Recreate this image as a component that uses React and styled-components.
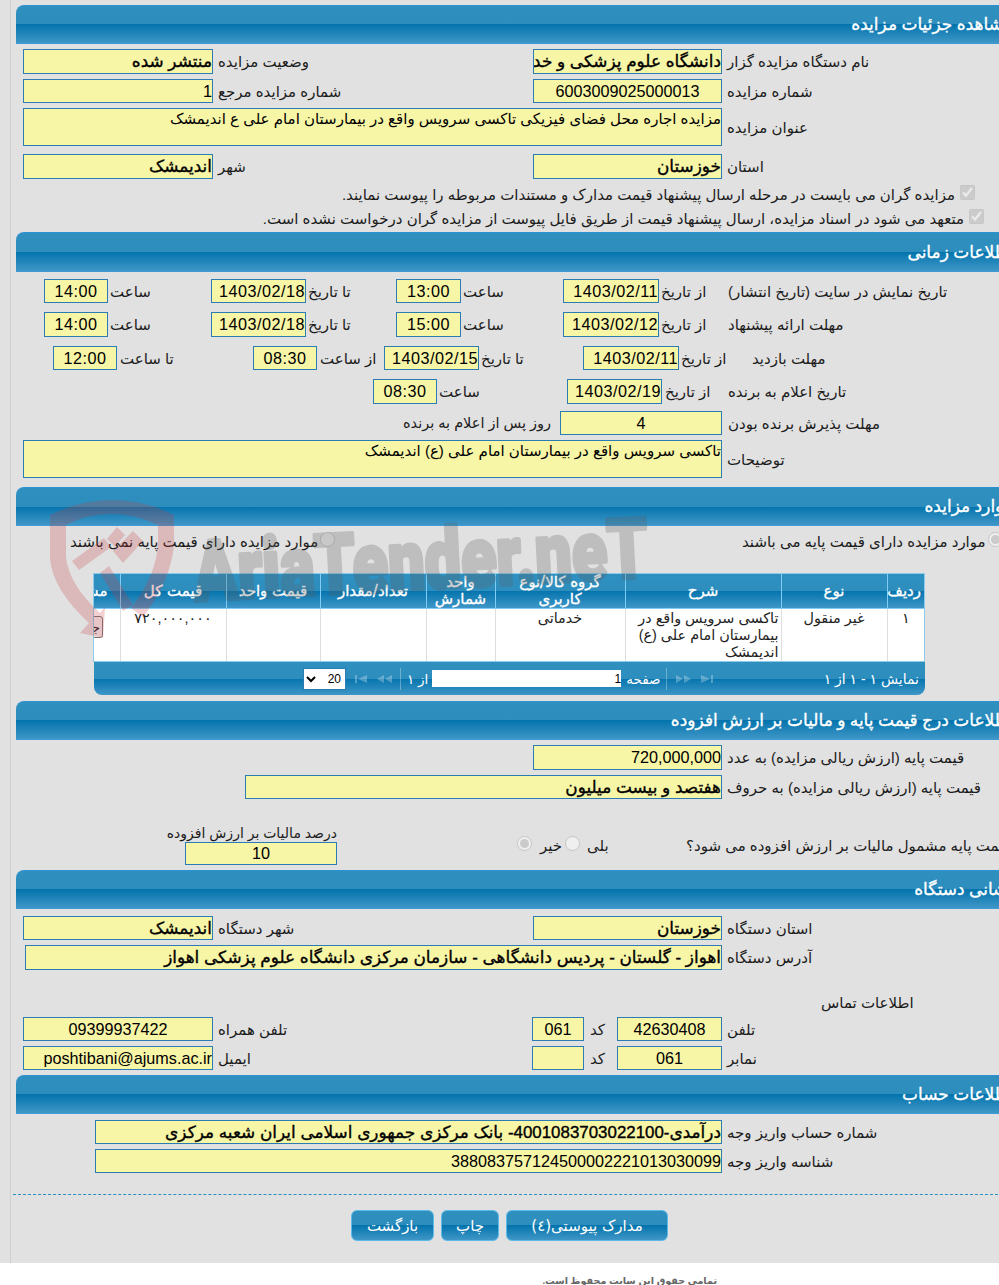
import React from 'react';
import styled, { createGlobalStyle, css } from 'styled-components';

const GlobalStyle = createGlobalStyle`
  html, body {
    margin: 0;
    padding: 0;
    background: #fff;
  }
  body {
    font-family: "Liberation Sans", "DejaVu Sans", sans-serif;
    font-size: 15px;
    color: #111;
  }
`;

const blueBand = css`
  background: linear-gradient(#2f90c0 0, #2d8ebe 50%, #0474ad 50%, #3f96c7 100%);
`;

const thick = css`
  -webkit-text-stroke: 0.35px currentColor;
`;

function App() {
  return (
    <Page>
      <GlobalStyle />
      <Frame>
        <Main>
          <Title $h={39}>مشاهده جزئیات مزایده</Title>
          <Row $cols="510px 1fr" $left={7} $h={25} $top={5}>
            <Cell>
              <Box $w={190} $bold readOnly dir="rtl" value="منتشر شده" />
              <Label>وضعیت مزایده</Label>
            </Cell>
            <Cell>
              <Box $w={189} $bold readOnly dir="rtl" value="دانشگاه علوم پزشکی و خدمات بهداشتی درمانی اهواز" />
              <Label>نام دستگاه مزایده گزار</Label>
            </Cell>
          </Row>
          <Row $cols="510px 1fr" $left={7} $h={24} $top={5}>
            <Cell>
              <Box $w={190} readOnly dir="rtl" value="1" />
              <Label>شماره مزایده مرجع</Label>
            </Cell>
            <Cell>
              <Box $w={189} $center readOnly value="6003009025000013" />
              <Label>شماره مزایده</Label>
            </Cell>
          </Row>
          <Row $cols="1fr" $left={7} $h={38} $top={5}>
            <Cell>
              <Area $w={699} readOnly dir="rtl" value="مزایده اجاره محل فضای فیزیکی تاکسی سرویس واقع در بیمارستان امام علی ع اندیمشک" />
              <Label>عنوان مزایده</Label>
            </Cell>
          </Row>
          <Row $cols="510px 1fr" $left={7} $h={25} $top={8}>
            <Cell>
              <Box $w={190} $bold readOnly dir="rtl" value="اندیمشک" />
              <Label>شهر</Label>
            </Cell>
            <Cell>
              <Box $w={189} $bold readOnly dir="rtl" value="خوزستان" />
              <Label>استان</Label>
            </Cell>
          </Row>
          <CheckRow $w={959} $top={3}>
            <Label>مزایده گران می بایست در مرحله ارسال پیشنهاد قیمت مدارک و مستندات مربوطه را پیوست نمایند.</Label>
            <Check type="checkbox" checked disabled readOnly />
          </CheckRow>
          <CheckRow $w={968} $top={0}>
            <Label>متعهد می شود در اسناد مزایده، ارسال پیشنهاد قیمت از طریق فایل پیوست از مزایده گران درخواست نشده است.</Label>
            <Check type="checkbox" checked disabled readOnly />
          </CheckRow>

          <Title $h={40} $top={2}>اطلاعات زمانی</Title>
          <Row $cols="167px 185px 167px 165px 1fr" $left={28} $h={24} $top={7}>
            <Cell $gap={2}><DateBox $w={64} $center readOnly value="14:00" /><Label>ساعت</Label></Cell>
            <Cell $gap={2}><DateBox $w={95} readOnly value="1403/02/18" $end /><Label>تا تاریخ</Label></Cell>
            <Cell $gap={2}><DateBox $w={65} $center readOnly value="13:00" /><Label>ساعت</Label></Cell>
            <Cell $gap={2}><DateBox $w={96} readOnly value="1403/02/11" $end /><Label>از تاریخ</Label></Cell>
            <Cell><Label>تاریخ نمایش در سایت (تاریخ انتشار)</Label></Cell>
          </Row>
          <Row $cols="167px 185px 167px 165px 1fr" $left={28} $h={25} $top={9}>
            <Cell $gap={2}><DateBox $w={64} $center readOnly value="14:00" /><Label>ساعت</Label></Cell>
            <Cell $gap={2}><DateBox $w={95} readOnly value="1403/02/18" $end /><Label>تا تاریخ</Label></Cell>
            <Cell $gap={2}><DateBox $w={65} $center readOnly value="15:00" /><Label>ساعت</Label></Cell>
            <Cell $gap={2}><DateBox $w={96} readOnly value="1403/02/12" $end /><Label>از تاریخ</Label></Cell>
            <Cell><Label>مهلت ارائه پیشنهاد</Label></Cell>
          </Row>
          <Row $cols="200px 131px 199px 169px 1fr" $left={37} $h={24} $top={9}>
            <Cell $gap={3}><DateBox $w={64} $center readOnly value="12:00" /><Label>تا ساعت</Label></Cell>
            <Cell $gap={3}><DateBox $w={64} $center readOnly value="08:30" /><Label>از ساعت</Label></Cell>
            <Cell $gap={2}><DateBox $w={95} $end readOnly value="1403/02/15" /><Label>تا تاریخ</Label></Cell>
            <Cell $gap={2}><DateBox $w={96} $end readOnly value="1403/02/11" /><Label>از تاریخ</Label></Cell>
            <Cell><Label>مهلت بازدید</Label></Cell>
          </Row>
          <Row $cols="194px 161px 1fr" $left={357} $h={25} $top={9}>
            <Cell $gap={2}><DateBox $w={64} $center readOnly value="08:30" /><Label>ساعت</Label></Cell>
            <Cell $gap={3}><DateBox $w={95} readOnly value="1403/02/19" $end /><Label>از تاریخ</Label></Cell>
            <Cell><Label>تاریخ اعلام به برنده</Label></Cell>
          </Row>
          <Row $cols="157px 1fr" $left={387} $h={24} $top={7}>
            <Cell><Label $size={14.5}>روز پس از اعلام به برنده</Label></Cell>
            <Cell $gap={6}><Box $w={162} $center readOnly value="4" /><Label>مهلت پذیرش برنده بودن</Label></Cell>
          </Row>
          <Row $cols="1fr" $left={7} $h={38} $top={5}>
            <Cell>
              <Area $w={699} readOnly dir="rtl" value="تاکسی سرویس واقع در بیمارستان امام علی (ع) اندیمشک" />
              <Label>توضیحات</Label>
            </Cell>
          </Row>

          <Title $h={39} $top={9}>موارد مزایده</Title>
          <Row $cols="272px 1fr" $left={54} $h={24} $top={3}>
            <Cell $gap={2}>
              <Label>موارد مزایده دارای قیمت پایه نمی باشند</Label>
              <Radio type="radio" name="base" disabled />
            </Cell>
            <Cell $gap={2} $indent={400}>
              <Label>موارد مزایده دارای قیمت پایه می باشند</Label>
              <Radio type="radio" name="base" disabled defaultChecked />
            </Cell>
          </Row>
          <TableWrap dir="rtl">
            <Grid>
              <colgroup>
                <col style={{ width: 37 }} />
                <col style={{ width: 106 }} />
                <col style={{ width: 156 }} />
                <col style={{ width: 130 }} />
                <col style={{ width: 69 }} />
                <col style={{ width: 106 }} />
                <col style={{ width: 94 }} />
                <col style={{ width: 106 }} />
                <col style={{ width: 70 }} />
              </colgroup>
              <thead>
                <tr>
                  <Th>ردیف</Th>
                  <Th>نوع</Th>
                  <Th>شرح</Th>
                  <Th>گروه کالا/نوع کاربری</Th>
                  <Th>واحد شمارش</Th>
                  <Th>تعداد/مقدار</Th>
                  <Th>قیمت واحد</Th>
                  <Th>قیمت کل</Th>
                  <ActionTh>مشاهده</ActionTh>
                </tr>
              </thead>
              <tbody>
                <tr>
                  <Td>۱</Td>
                  <Td>غیر منقول</Td>
                  <Td $desc>تاکسی سرویس واقع در بیمارستان امام علی (ع) اندیمشک</Td>
                  <Td>خدماتی</Td>
                  <Td />
                  <Td />
                  <Td />
                  <Td>۷۲۰,۰۰۰,۰۰۰</Td>
                  <ActionTd><RowButton type="button">جزئیات</RowButton></ActionTd>
                </tr>
              </tbody>
            </Grid>
          </TableWrap>
          <Pager>
            <PageSize dir="rtl" defaultValue="20">
              <option>20</option>
              <option>50</option>
            </PageSize>
            <PagerIcon $ml={9} viewBox="0 0 12 10" $w={12}>
              <rect x="0" y="1" width="2" height="8" />
              <path d="M12 1v8L3 5z" />
            </PagerIcon>
            <PagerIcon $ml={10} viewBox="0 0 15 10" $w={15}>
              <path d="M7 1v8L0 5zM15 1v8L8 5z" />
            </PagerIcon>
            <PagerSep $ml={8} />
            <PagerText $ml={6}>از ۱</PagerText>
            <PageInput readOnly dir="rtl" value="1" />
            <PagerText $ml={5}>صفحه</PagerText>
            <PagerSep $ml={5} />
            <PagerIcon $ml={9} viewBox="0 0 15 10" $w={15}>
              <path d="M0 1v8l7-4zM8 1v8l7-4z" />
            </PagerIcon>
            <PagerIcon $ml={10} viewBox="0 0 12 10" $w={12}>
              <path d="M0 1v8l9-4z" />
              <rect x="10" y="1" width="2" height="8" />
            </PagerIcon>
            <PagerInfo>نمایش ۱ - ۱ از ۱</PagerInfo>
          </Pager>

          <Title $h={39} $top={6}>اطلاعات درج قیمت پایه و مالیات بر ارزش افزوده</Title>
          <Row $cols="1fr" $left={517} $h={25} $top={5}>
            <Cell><Box $w={189} readOnly dir="rtl" value="720,000,000" /><Label>قیمت پایه (ارزش ریالی مزایده) به عدد</Label></Cell>
          </Row>
          <Row $cols="1fr" $left={229} $h={24} $top={5}>
            <Cell><Box $w={477} $bold readOnly dir="rtl" value="هفتصد و بیست میلیون" /><Label>قیمت پایه (ارزش ریالی مزایده) به حروف</Label></Cell>
          </Row>
          <Row $cols="348px 169px 1fr" $left={153} $h={40} $top={26}>
            <TaxCell>
              <Label $size={14}>درصد مالیات بر ارزش افزوده</Label>
              <Box $w={152} $h={23} $center readOnly value="10" />
            </TaxCell>
            <Cell $gap={3}>
              <Radio type="radio" name="tax" disabled defaultChecked />
              <Label $ml={5}>خیر</Label>
              <Radio type="radio" name="tax" disabled />
              <Label $ml={4}>بلی</Label>
            </Cell>
            <Cell><Label>قیمت پایه مشمول مالیات بر ارزش افزوده می شود؟</Label></Cell>
          </Row>

          <Title $h={39} $top={5}>نشانی دستگاه</Title>
          <Row $cols="510px 1fr" $left={7} $h={24} $top={7}>
            <Cell><Box $w={190} $bold readOnly dir="rtl" value="اندیمشک" /><Label>شهر دستگاه</Label></Cell>
            <Cell><Box $w={189} $bold readOnly dir="rtl" value="خوزستان" /><Label>استان دستگاه</Label></Cell>
          </Row>
          <Row $cols="1fr" $left={9} $h={25} $top={5}>
            <Cell><Box $w={697} $bold readOnly dir="rtl" value="اهواز - گلستان - پردیس دانشگاهی - سازمان مرکزی دانشگاه علوم پزشکی اهواز" /><Label>آدرس دستگاه</Label></Cell>
          </Row>
          <Row $cols="1fr" $left={805} $h={20} $top={22}>
            <Cell><Label>اطلاعات تماس</Label></Cell>
          </Row>
          <Row $cols="509px 85px 1fr" $left={7} $h={24} $top={5}>
            <Cell><Box $w={190} $center readOnly value="09399937422" /><Label>تلفن همراه</Label></Cell>
            <Cell $gap={6}><Box $w={52} $center readOnly value="061" /><Label>کد</Label></Cell>
            <Cell><Box $w={105} $center readOnly value="42630408" /><Label>تلفن</Label></Cell>
          </Row>
          <Row $cols="509px 85px 1fr" $left={7} $h={24} $top={5}>
            <Cell><Box $w={190} readOnly dir="rtl" value="poshtibani@ajums.ac.ir" /><Label>ایمیل</Label></Cell>
            <Cell $gap={6}><Box $w={52} $center readOnly value="" /><Label>کد</Label></Cell>
            <Cell><Box $w={105} $center readOnly value="061" /><Label>نمابر</Label></Cell>
          </Row>

          <Title $h={39} $top={5}>اطلاعات حساب</Title>
          <Row $cols="1fr" $left={79} $h={24} $top={6}>
            <Cell><Box $w={627} $bold readOnly dir="rtl" value="درآمدی-4001083703022100- بانک مرکزی جمهوری اسلامی ایران شعبه مرکزی" /><Label>شماره حساب واریز وجه</Label></Cell>
          </Row>
          <Row $cols="1fr" $left={79} $h={24} $top={5}>
            <Cell><Box $w={627} readOnly dir="rtl" value="388083757124500002221013030099" /><Label>شناسه واریز وجه</Label></Cell>
          </Row>
          <Divider />
          <Actions>
            <ActionButton type="button" $w={83}>بازگشت</ActionButton>
            <ActionButton type="button" $w={58}>چاپ</ActionButton>
            <ActionButton type="button" $w={162}>مدارک پیوستی(٤)</ActionButton>
          </Actions>
        </Main>
      </Frame>
      <Footer>تمامی حقوق این سایت محفوظ است.</Footer>

      <Watermark viewBox="0 0 620 150" aria-hidden="true">
        <g fill="#c8383c" fillOpacity="0.24">
          <path d="M5 20 Q35 5 67 5 Q100 5 129 20 L129 50 Q126 85 98 122 L86 113 Q112 80 113 47 L113 30 Q90 19 67 19 Q42 19 21 30 L21 62 Q24 90 55 118 L60 112 L58 143 L35 138 L44 128 Q8 95 5 64 Z" />
          <path d="M27 66 L59 43 L66 52 L34 75 Z" />
          <path d="M62 44 L72 32 L80 40 L70 52 Z" />
          <path d="M68 56 L88 36 L98 46 L78 68 Z" />
          <path d="M55 78 L64 71 L88 110 L78 116 Z" />
        </g>
        <WatermarkText x="150" y="106" textLength="455" lengthAdjust="spacingAndGlyphs" transform="rotate(-3 150 106)">
          AriaTender.neT
        </WatermarkText>
      </Watermark>
    </Page>
  );
}

export default App;

const Page = styled.div`
  position: relative;
  width: 999px;
  height: 1285px;
  overflow: hidden;
  background: #fff;
`;

const Frame = styled.div`
  width: 1020px;
  padding-left: 10px;
  box-sizing: border-box;
  background: #e1e1e1;
`;

const Main = styled.main`
  box-sizing: border-box;
  width: 1010px;
  height: 1263px;
  padding: 5px 0 0 5px;
  border-left: 1px solid #cfcfcf;
`;

const Title = styled.h2`
  ${blueBand}
  ${thick}
  box-sizing: border-box;
  height: ${({ $h }) => $h}px;
  margin: ${({ $top }) => $top || 0}px 0 0;
  padding: 0 7px 0 0;
  border-top: 1px solid #2b93d4;
  border-bottom: 1px solid #3f9bd6;
  border-top-left-radius: 8px;
  font-family: "DejaVu Sans", sans-serif;
  font-size: 17px;
  font-weight: 400;
  word-spacing: -1px;
  line-height: ${({ $h }) => $h - 2}px;
  color: #fff;
  direction: rtl;
  white-space: nowrap;
`;

const Row = styled.div`
  display: grid;
  grid-template-columns: ${({ $cols }) => $cols};
  grid-template-rows: ${({ $h }) => $h}px;
  align-items: center;
  height: ${({ $h }) => $h}px;
  margin-top: ${({ $top }) => $top}px;
  padding-left: ${({ $left }) => $left}px;
  white-space: nowrap;
`;

const Cell = styled.div`
  display: flex;
  align-items: center;
  gap: ${({ $gap }) => ($gap === undefined ? 5 : $gap)}px;
  height: 100%;
  padding-left: ${({ $indent }) => $indent || 0}px;
`;

const TaxCell = styled.div`
  display: flex;
  flex-direction: column;
  align-items: flex-end;
  justify-content: flex-end;
  width: 168px;
  height: 100%;
`;

const Label = styled.label`
  direction: rtl;
  margin-left: ${({ $ml }) => $ml || 0}px;
  font-size: ${({ $size }) => $size || 15}px;
  line-height: 17px;
  color: #1c1c1c;
  white-space: nowrap;
`;

const fieldStyles = css`
  box-sizing: border-box;
  flex: none;
  width: ${({ $w }) => $w}px;
  padding: 0;
  border: 1px solid #2a7cb2;
  background: #f7f5a6;
  color: #000;
  outline: none;
  font-family: "Liberation Sans", "DejaVu Sans", sans-serif;
`;

const Box = styled.input`
  ${fieldStyles}
  ${({ $bold }) => $bold && thick}
  height: ${({ $h }) => ($h ? `${$h}px` : '100%')};
  font-size: ${({ $bold }) => ($bold ? 16.9 : 16.2)}px;
  text-align: ${({ $center, $end }) => ($center ? 'center' : $end ? 'right' : 'start')};
`;

const DateBox = styled(Box)`
  letter-spacing: 0.5px;
`;

const Area = styled.textarea`
  ${fieldStyles}
  height: 100%;
  overflow: hidden;
  resize: none;
  font-size: 15px;
  line-height: 20px;
`;

const CheckRow = styled.div`
  display: flex;
  justify-content: flex-end;
  align-items: center;
  gap: 5px;
  box-sizing: border-box;
  width: ${({ $w }) => $w}px;
  height: 24px;
  margin-top: ${({ $top }) => $top}px;
`;

const Check = styled.input`
  width: 15px;
  height: 15px;
  margin: -3px 0 0;
  flex: none;
`;

const Radio = styled.input`
  width: 15px;
  height: 15px;
  margin: -3px 0 0;
  flex: none;
`;

const TableWrap = styled.div`
  box-sizing: border-box;
  width: 832px;
  height: 89px;
  margin: 20px 0 0 77px;
  overflow: hidden;
  border: 1px solid #8ccbea;
`;

const Grid = styled.table`
  width: 874px;
  table-layout: fixed;
  border-collapse: collapse;
  background: #fff;
`;

const Th = styled.th`
  ${blueBand}
  ${thick}
  height: 34px;
  padding: 0 3px;
  border-left: 1px solid #7fcdf5;
  border-bottom: 1px solid #7fcdf5;
  font-family: "DejaVu Sans", sans-serif;
  font-size: 15px;
  font-weight: 400;
  line-height: 17px;
  color: #fff;
  text-align: center;
`;

const ActionTh = styled(Th)`
  padding-right: 12px;
  text-align: right;
  white-space: nowrap;
`;

const Td = styled.td`
  height: 50px;
  padding: 1px 2px 0;
  border-left: 1px solid #dedede;
  font-size: 14.4px;
  line-height: 17px;
  color: #222;
  text-align: ${({ $desc }) => ($desc ? 'right' : 'center')};
  vertical-align: top;
`;

const ActionTd = styled(Td)`
  padding: 7px 17px 0 0;
  overflow: hidden;
  text-align: right;
`;

const RowButton = styled.button`
  width: 45px;
  height: 22px;
  padding: 0 2px;
  border: 1px solid #777;
  border-radius: 3px;
  background: #f2f2f2;
  font-size: 13px;
  color: #222;
  text-align: right;
`;

const Pager = styled.div`
  ${blueBand}
  display: flex;
  align-items: center;
  box-sizing: border-box;
  width: 831px;
  height: 33px;
  margin: 0 0 0 78px;
  padding: 0 6px 0 209px;
  border-radius: 0 0 8px 8px;
`;

const PageSize = styled.select`
  flex: none;
  box-sizing: border-box;
  width: 43px;
  height: 22px;
  padding: 0;
  border: 1px solid #2a7cb2;
  background: #fff;
  font-family: "Liberation Sans", sans-serif;
  font-size: 12px;
  color: #000;
`;

const PagerIcon = styled.svg`
  flex: none;
  width: ${({ $w }) => $w}px;
  height: 10px;
  margin-left: ${({ $ml }) => $ml}px;
  fill: #fff;
  fill-opacity: 0.28;
`;

const PagerSep = styled.span`
  flex: none;
  width: 1px;
  height: 22px;
  margin-left: ${({ $ml }) => $ml}px;
  background: rgba(255, 255, 255, 0.3);
`;

const PagerText = styled.span`
  flex: none;
  direction: rtl;
  margin-left: ${({ $ml }) => $ml}px;
  font-size: 13.5px;
  color: #fff;
`;

const PageInput = styled.input`
  flex: none;
  box-sizing: border-box;
  width: 189px;
  height: 17px;
  margin-left: 4px;
  padding: 0;
  border: none;
  background: #fff;
  font-family: "Liberation Sans", sans-serif;
  font-size: 12px;
  color: #000;
`;

const PagerInfo = styled.span`
  margin-left: auto;
  direction: rtl;
  font-size: 14px;
  color: #fff;
`;

const Divider = styled.hr`
  width: 990px;
  height: 0;
  margin: 21px 0 0 -3px;
  border: none;
  border-top: 1px dashed #2a8fc4;
`;

const Actions = styled.div`
  display: flex;
  gap: 7px;
  margin: 15px 0 0 335px;
`;

const ActionButton = styled.button`
  ${blueBand}
  box-sizing: border-box;
  width: ${({ $w }) => $w}px;
  height: 31px;
  padding: 0;
  border: 1px solid #5cb9e8;
  border-radius: 6px;
  font-family: "DejaVu Sans", sans-serif;
  font-size: 15px;
  color: #fff;
`;

const Footer = styled.footer`
  height: 22px;
  padding: 11px 282px 0 0;
  box-sizing: border-box;
  direction: rtl;
  font-size: 9.6px;
  font-weight: 700;
  line-height: 13px;
  color: #666;
  background: #fff;
`;

const Watermark = styled.svg`
  position: absolute;
  left: 45px;
  top: 495px;
  width: 620px;
  height: 150px;
  pointer-events: none;
`;

const WatermarkText = styled.text`
  font-family: "Roboto", sans-serif;
  font-size: 84px;
  font-weight: 900;
  fill: #5c5c5c;
  stroke: #5c5c5c;
  stroke-width: 4px;
  stroke-linejoin: round;
  opacity: 0.26;
`;
